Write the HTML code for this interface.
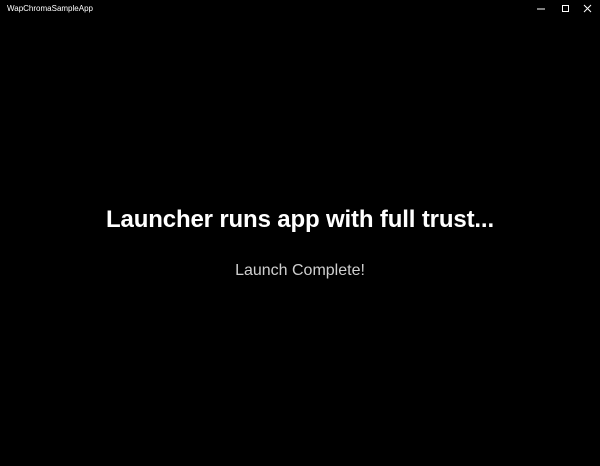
<!DOCTYPE html>
<html><head><style>
html,body{margin:0;padding:0;background:#000;width:600px;height:466px;overflow:hidden;font-family:"Liberation Sans",sans-serif;}
.title{position:absolute;left:7px;top:4px;color:#fff;font-size:8px;}
h1{position:absolute;left:0;width:600px;top:206px;margin:0;text-align:center;color:#fff;font-size:24px;font-weight:bold;letter-spacing:-0.15px;}
p{position:absolute;left:0;width:600px;top:262px;margin:0;text-align:center;color:#cfcfcf;font-size:16px;}
</style></head><body>
<div class="title">WapChromaSampleApp</div>
<svg style="position:absolute;left:535px;top:4px" width="60" height="10">
<line x1="2" y1="5" x2="10" y2="5" stroke="#fff" stroke-width="1"/>
<rect x="27.5" y="1.5" width="6" height="6" fill="none" stroke="#fff"/>
<path d="M49 1 L56 8 M56 1 L49 8" stroke="#fff" stroke-width="1"/>
</svg>
<h1>Launcher runs app with full trust...</h1>
<p>Launch Complete!</p>
</body></html>
